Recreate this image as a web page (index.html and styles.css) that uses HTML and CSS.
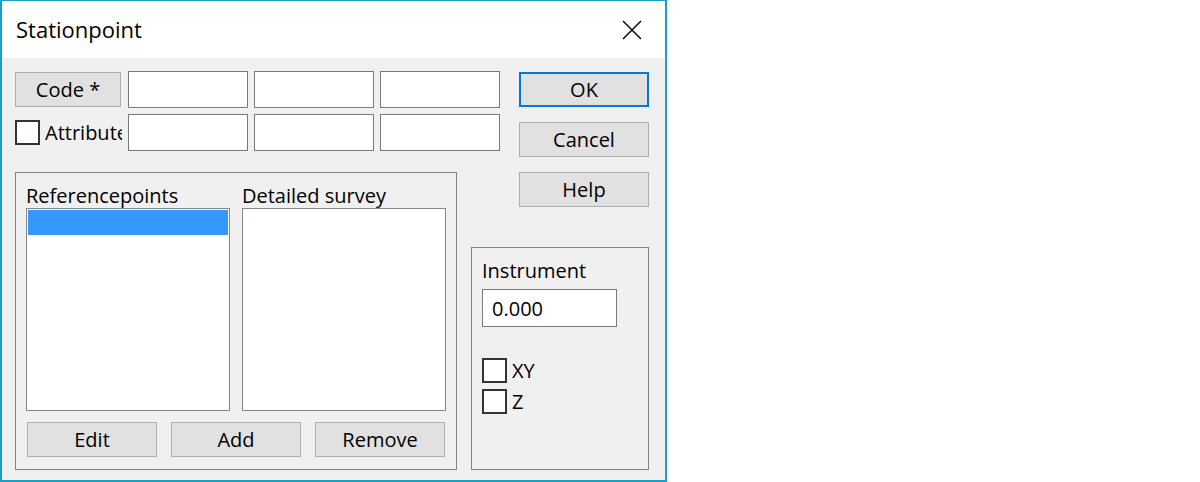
FILE: index.html
```html
<!DOCTYPE html>
<html lang="en">
<head>
  <meta charset="UTF-8">
  <meta name="viewport" content="width=device-width, initial-scale=1.0">
  <title>Stationpoint</title>
  <link rel="stylesheet" href="styles.css">
</head>
<body>
  <div class="dialog">
    <div class="titlebar">
      <span class="title">Stationpoint</span>
      <svg class="close" width="20" height="20" viewBox="0 0 20 20">
        <path d="M1 1 L19 19 M19 1 L1 19" stroke="#111" stroke-width="1.6" fill="none" />
      </svg>
    </div>

    <div class="content">
      <div class="form">
        <div class="form-row">
          <button class="btn btn-code">Code *</button>
          <input type="text" class="field" />
          <input type="text" class="field" />
          <input type="text" class="field" />
        </div>
        <div class="form-row">
          <label class="check">
            <span class="box"></span>
            <span class="check-text clip">Attribute</span>
          </label>
          <input type="text" class="field" />
          <input type="text" class="field" />
          <input type="text" class="field" />
        </div>
      </div>

      <div class="actions">
        <button class="btn btn-default">OK</button>
        <button class="btn">Cancel</button>
        <button class="btn">Help</button>
      </div>

      <div class="group group-points">
        <div class="lists">
          <div class="list-col">
            <div class="caption">Referencepoints</div>
            <div class="listbox">
              <div class="list-item selected"></div>
            </div>
          </div>
          <div class="list-col">
            <div class="caption">Detailed survey</div>
            <div class="listbox"></div>
          </div>
        </div>
        <div class="list-buttons">
          <button class="btn">Edit</button>
          <button class="btn">Add</button>
          <button class="btn">Remove</button>
        </div>
      </div>

      <div class="group group-instrument">
        <div class="caption">Instrument</div>
        <input type="text" class="field field-instrument" value="0.000" />
        <div class="checks">
          <label class="check">
            <span class="box"></span>
            <span class="check-text">XY</span>
          </label>
          <label class="check">
            <span class="box"></span>
            <span class="check-text">Z</span>
          </label>
        </div>
      </div>
    </div>
  </div>
</body>
</html>
```

FILE: styles.css
```css
body {
  margin: 0;
  padding: 0;
  background: #fff;
  font-family: "Open Sans", "Noto Sans", sans-serif;
  font-size: 20px;
  color: #000;
}

.dialog {
  width: 667px;
  height: 482px;
  box-sizing: border-box;
  border: 2px solid #19a0c4;
  border-top-width: 1px;
  display: flex;
  flex-direction: column;
}

/* title bar */
.titlebar {
  height: 57px;
  flex: none;
  background: #fff;
  display: flex;
  align-items: center;
  padding: 0 23px 0 14px;
}

.title {
  font-size: 22px;
  line-height: 27px;
}

.close {
  margin-left: auto;
  display: block;
}

/* dialog body */
.content {
  flex: 1;
  background: #f0f0f0;
  padding: 13px 0 0 13px;
  display: grid;
  grid-template-columns: 442px 14px 29px 19px 130px;
  grid-template-rows: 101px 75px 223px;
}

.btn {
  font-family: inherit;
  font-size: 20px;
  color: #000;
  background: #e1e1e1;
  border: 1px solid #adadad;
  box-sizing: border-box;
  height: 35px;
  padding: 0;
  line-height: 1;
}

.btn-default {
  border: 2px solid #0078d7;
}

.field {
  box-sizing: border-box;
  width: 120px;
  height: 37px;
  margin: 0;
  border: 1px solid #7a7a7a;
  background: #fff;
  font-family: inherit;
  font-size: 20px;
  padding: 0 9px;
  outline: none;
}

/* code / attribute rows */
.form {
  grid-column: 1 / 4;
  grid-row: 1;
  display: flex;
  flex-direction: column;
  gap: 6px;
}

.form-row {
  display: grid;
  grid-template-columns: 107px 120px 120px 120px;
  column-gap: 6px;
  align-items: center;
}

.btn-code {
  width: 106px;
}

.check {
  display: flex;
  align-items: center;
}

.box {
  width: 25px;
  height: 25px;
  box-sizing: border-box;
  border: 2px solid #333;
  background: #fff;
  flex: none;
}

.check-text {
  margin-left: 5px;
  line-height: 25px;
  white-space: nowrap;
}

.clip {
  width: 77px;
  overflow: hidden;
}

/* OK / Cancel / Help */
.actions {
  grid-column: 5;
  grid-row: 1 / 3;
  display: flex;
  flex-direction: column;
  gap: 15px;
  padding-top: 1px;
}

/* group boxes */
.group {
  border: 1px solid #828282;
  box-sizing: border-box;
}

.caption {
  line-height: 25px;
}

.group-points {
  grid-column: 1;
  grid-row: 2 / 4;
  padding: 10px 10px 0 10px;
  display: flex;
  flex-direction: column;
}

.lists {
  display: flex;
  gap: 12px;
}

.list-col {
  width: 204px;
}

.listbox {
  height: 203px;
  box-sizing: border-box;
  border: 1px solid #828790;
  background: #fff;
  padding: 1px;
}

.list-item {
  height: 25px;
}

.list-item.selected {
  background: #3399ff;
}

.list-buttons {
  display: flex;
  gap: 14px;
  margin-top: 11px;
  padding-left: 1px;
}

.list-buttons .btn {
  width: 130px;
}

.group-instrument {
  grid-column: 3 / 6;
  grid-row: 3;
  padding: 10px 10px 0 10px;
}

.field-instrument {
  width: 135px;
  height: 38px;
  margin-top: 6px;
  display: block;
}

.checks {
  margin-top: 31px;
  display: flex;
  flex-direction: column;
  gap: 6px;
}
```
